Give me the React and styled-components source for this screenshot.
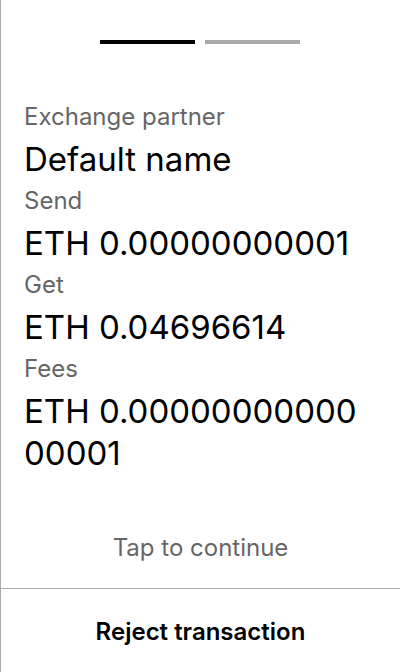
import React from 'react';
import styled, {createGlobalStyle} from 'styled-components';

const GlobalStyle = createGlobalStyle`
    html, body {
        margin: 0;
        padding: 0;
        background: #fff;
    }
    body {
        font-family: Inter, "Noto Sans", sans-serif;
        color: #000;
    }
`;

const Screen = styled.div`
    box-sizing: border-box;
    width: 400px;
    height: 672px;
    border-left: 1px solid #aaa;
    display: flex;
    flex-direction: column;
    overflow: hidden;
`;

const Steps = styled.div`
    display: flex;
    justify-content: center;
    gap: 10px;
    margin-top: 40px;
    padding-right: 1px;
`;

const Step = styled.div`
    width: 95px;
    height: 4px;
    background-color: ${props => props.active ? '#000' : '#aaa'};
`;

const Details = styled.div`
    padding: 0 23px;
    margin-top: 52px;
    flex: 1;
`;

const Label = styled.div`
    font-size: 24px;
    line-height: 42px;
    color: #666;
`;

const Value = styled.div`
    font-size: 33px;
    line-height: 42px;
    color: #000;
    word-break: break-all;
`;

const Hint = styled.div`
    text-align: center;
    font-size: 24px;
    line-height: 24px;
    color: #666;
    padding-bottom: 28px;
`;

const RejectButton = styled.button`
    box-sizing: border-box;
    height: 84px;
    border: none;
    border-top: 1px solid #aaa;
    background: none;
    display: flex;
    align-items: center;
    justify-content: center;
    font-family: inherit;
    font-size: 24px;
    line-height: 24px;
    font-weight: 600;
    color: #000;
    padding: 3px 0 0;
`;

const rows = [
    {label: 'Exchange partner', value: 'Default name'},
    {label: 'Send', value: 'ETH 0.00000000001'},
    {label: 'Get', value: 'ETH 0.04696614'},
    {label: 'Fees', value: 'ETH 0.0000000000000001'},
];

export default function App() {
    return (
        <Screen>
            <GlobalStyle/>
            <Steps>
                <Step active/>
                <Step/>
            </Steps>
            <Details>
                {rows.map(row => (
                    <React.Fragment key={row.label}>
                        <Label>{row.label}</Label>
                        <Value>{row.value}</Value>
                    </React.Fragment>
                ))}
            </Details>
            <Hint>Tap to continue</Hint>
            <RejectButton>Reject transaction</RejectButton>
        </Screen>
    );
}
